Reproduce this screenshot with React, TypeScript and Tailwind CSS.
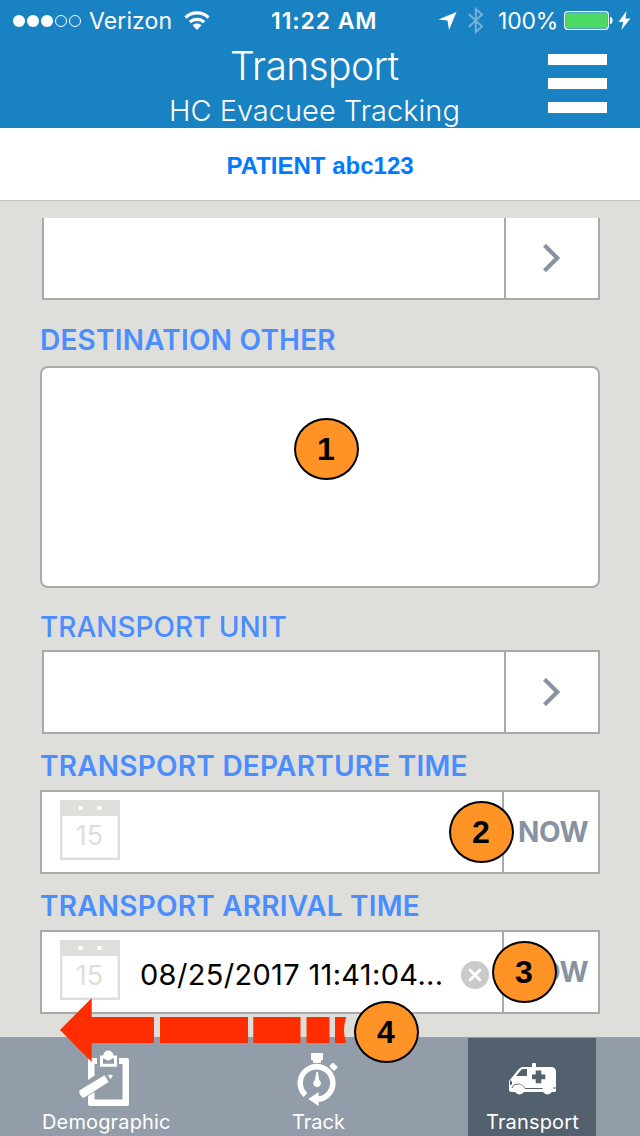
import React from "react";

function StatusBar() {
  return (
    <div className="relative flex h-[41px] items-center text-[23px] leading-[41px] whitespace-nowrap">
      <div className="flex w-[271px] items-center pl-[13px]">
        <div className="flex gap-[2px]">
          {[1, 1, 1, 0, 0].map((on, i) => (
            <span
              key={i}
              className={on ? "size-3 rounded-full bg-white" : "size-3 rounded-full border border-white"}
            />
          ))}
        </div>
        <span className="ml-[8px] w-[84px] pt-px tracking-[0.1px]">Verizon</span>
        <svg className="ml-[11px]" width="26" height="20" viewBox="0 0 26 20" fill="none" stroke="#fff">
          <path d="M1.5 6.6C8 0.4 18 0.4 24.5 6.6" strokeWidth="3.2" />
          <path d="M5.8 11.2C10 7.3 16 7.3 20.2 11.2" strokeWidth="3.2" />
          <path d="M8.5 14.3C11 12 15 12 17.5 14.3L13 19Z" fill="#fff" stroke="none" />
        </svg>
      </div>
      <span className="w-[167px] pt-px font-semibold tracking-[0.9px]">11:22 AM</span>
      <svg width="200" height="40" viewBox="437 0 200 40" className="absolute left-[437px] top-0">
        <path d="M438.5 19.5L456.5 12L449 30L447.5 20.5Z" fill="#fff" />
        <path
          d="M468.7 14L482 26.5L475.8 32V9L482 14.5L468.7 27"
          fill="none"
          stroke="#72b1db"
          strokeWidth="2"
        />
        <rect x="564.7" y="11.7" width="43.6" height="17.6" rx="3" fill="none" stroke="#fff" strokeWidth="1.2" />
        <rect x="566" y="13" width="41" height="15" rx="1.5" fill="#4cd964" />
        <path d="M610 17C613.5 17 613.5 24 610 24Z" fill="#fff" />
        <path d="M626.5 11L618.5 22H623.2L621.3 30L630.5 18.5H625.5Z" fill="#fff" />
      </svg>
      <span className="ml-[60px] pt-px tracking-[-0.2px]">100%</span>
    </div>
  );
}

function Header() {
  return (
    <header className="relative h-32 shrink-0 overflow-hidden bg-[#1982c3] text-white">
      <StatusBar />
      <h1 className="pl-[230px] text-[39px] leading-[50px] font-[350] tracking-[-0.6px] whitespace-nowrap">
        Transport
      </h1>
      <h2 className="pl-[169px] text-[29px] leading-[40px] font-[350] tracking-[0px] whitespace-nowrap">
        HC Evacuee Tracking
      </h2>
      <button aria-label="Menu" className="absolute left-[548px] top-[54px] flex w-[59px] flex-col gap-[13px]">
        <span className="h-[11px] bg-white" />
        <span className="h-[11px] bg-white" />
        <span className="h-[11px] bg-white" />
      </button>
    </header>
  );
}

function Chevron() {
  return (
    <svg width="17" height="28" viewBox="0 0 17 28" fill="none" stroke="#8793a3" strokeWidth="4.2">
      <path d="M1.5 1.3L14.2 14L1.5 26.7" />
    </svg>
  );
}

function CalendarIcon() {
  return (
    <svg width="60" height="60" viewBox="0 0 60 60" className="ml-[18px] shrink-0">
      <rect x="1.2" y="1.2" width="57.6" height="57.6" fill="#fff" stroke="#dedfda" strokeWidth="2.4" />
      <rect width="60" height="16" fill="#dedfda" />
      <rect x="18.5" y="6" width="4" height="4" fill="#fff" />
      <rect x="37.5" y="6" width="4" height="4" fill="#fff" />
      <text
        x="29.5"
        y="44.5"
        textAnchor="middle"
        fill="#dedfda"
        fontFamily="Inter, sans-serif"
        fontSize="27"
        fontWeight="400"
      >
        15
      </text>
    </svg>
  );
}

function SelectRow({ className }: { className: string }) {
  return (
    <div className={`${className} ml-[42px] flex w-[558px] border-[#aaaaaa] bg-white`}>
      <div className="w-[460px]" />
      <div className="flex flex-1 items-center border-l-2 border-[#aaaaaa] pl-[37px]">
        <Chevron />
      </div>
    </div>
  );
}

function TimeRow({ value }: { value?: string }) {
  return (
    <div className="ml-10 flex h-[84px] w-[560px] border-2 border-[#aaaaaa] bg-white">
      <div className="flex w-[460px] items-start pt-2">
        <CalendarIcon />
        {value && (
          <>
            <span className="ml-[20px] mt-[11px] w-[306px] text-[29px] leading-[48px] font-normal tracking-[0.33px] whitespace-nowrap text-black">
              {value}
            </span>
            <svg width="28" height="28" viewBox="0 0 28 28" className="ml-[15px] mt-[21px] shrink-0">
              <circle cx="14" cy="14" r="14" fill="#cacaca" />
              <path d="M8.3 8.3L19.7 19.7M19.7 8.3L8.3 19.7" stroke="#fff" strokeWidth="2.7" />
            </svg>
          </>
        )}
      </div>
      <div className="flex flex-1 items-center border-l-2 border-[#aaaaaa] pl-[14px] text-[28px] font-bold tracking-[-0.4px] text-[#8793a3]">
        <span className="leading-[80px]">NOW</span>
      </div>
    </div>
  );
}

const markers = [
  { n: "1", place: "left-[294px] top-[418px]" },
  { n: "2", place: "left-[449px] top-[801px]" },
  { n: "3", place: "left-[492px] top-[941px]" },
  { n: "4", place: "left-[354px] top-[1001px]" },
];

function Arrow() {
  return (
    <svg width="288" height="66" viewBox="60 997 288 66" className="absolute left-[60px] top-[997px]" fill="#ff2d00">
      <path d="M60 1030L91.7 998V1017H154V1043H91.7V1062Z" />
      <path d="M160 1017H248V1043H160ZM253.3 1017H300.5V1043H253.3ZM306.5 1017H329.5V1043H306.5Z" />
      <path d="M335 1017H346V1018Q342 1030 346 1042V1043H335Z" />
    </svg>
  );
}

function ClipboardIcon() {
  return (
    <svg width="52" height="56" viewBox="78 1050 52 56" className="absolute left-[78px] top-[13px]" fill="#fff">
      <path d="M88 1058H97V1064H94.5V1075.5L88 1080Z" />
      <path d="M119 1058H127Q129 1058 129 1060V1104Q129 1106 127 1106H90Q88 1106 88 1104V1096L94.5 1092V1099.5H122.5V1064H119Z" />
      <path d="M101.5 1057H115.5V1065.3H101.5Z" fill="none" stroke="#fff" strokeWidth="3" />
      <circle cx="108.3" cy="1055.5" r="5" />
      <path d="M79.3 1090.5L104.5 1075.3L108.7 1082L83.5 1098Q79 1095.5 79.3 1090.5Z" />
      <path d="M108 1074.7L113 1075L110.5 1079.5Z" />
    </svg>
  );
}

function StopwatchIcon() {
  return (
    <svg width="42" height="56" viewBox="297 1051 42 56" className="absolute left-[83px] top-[14px]" fill="#fff">
      <path d="M311 1053H323V1060H321.5L320.5 1063H313.5L312.5 1060H311Z" />
      <rect x="330" y="1064" width="7" height="5.4" rx="1" transform="rotate(45 333.5 1066.7)" />
      <path
        d="M305.5 1095A16.3 16.3 0 1 1 317.3 1099.3"
        fill="none"
        stroke="#fff"
        strokeWidth="5.5"
      />
      <path d="M308.3 1099L318.6 1092V1106Z" />
      <path d="M316.3 1072H318L319.2 1080A3.8 3.8 0 1 1 315 1080Z" />
    </svg>
  );
}

function AmbulanceIcon() {
  return (
    <svg width="50" height="34" viewBox="508 1062 50 34" className="absolute left-[40px] top-[24px]">
      <path
        d="M532 1067V1064Q532 1063 533 1063H535Q536 1063 536 1064V1067H551Q556 1067 556 1072V1091Q556 1092 554 1092H511Q509 1092 509 1089V1081L518 1070Q520 1067 523 1067Z"
        fill="#fff"
      />
      <path d="M522 1069H527V1076H516Z" fill="#53606e" />
      <path d="M535.7 1070.5H541.3V1074.5H545.3V1079.3H541.3V1083.3H535.7V1079.3H532V1074.5H535.7Z" fill="#53606e" />
      <path d="M510 1080L512 1081.5V1084.5L510 1085Z" fill="#53606e" />
      <path d="M512 1088Q513 1084 519 1084Q524 1085 525 1088.5H544" fill="none" stroke="#53606e" strokeWidth="1" />
      <circle cx="519.5" cy="1089.5" r="5" fill="#fff" />
      <circle cx="547.5" cy="1089.5" r="5" fill="#fff" />
      <path d="M553 1088H556" stroke="#53606e" />
    </svg>
  );
}

function TabBar() {
  return (
    <nav className="flex h-[99px] shrink-0 bg-[#929da9] text-[20px] leading-[26px] whitespace-nowrap text-white">
      <div className="relative w-[214px] pl-[42px] pt-[72px]">
        <ClipboardIcon />
        <span className="tracking-[0.15px]">Demographic</span>
      </div>
      <div className="relative w-[254px] pl-[78px] pt-[72px]">
        <StopwatchIcon />
        <span className="tracking-[0px]">Track</span>
      </div>
      <div className="relative mt-px w-32 bg-[#53606e] pl-[18px] pt-[71px]">
        <AmbulanceIcon />
        <span className="tracking-[0.15px]">Transport</span>
      </div>
    </nav>
  );
}

export default function App() {
  return (
    <div className="relative flex h-[1136px] w-[640px] flex-col overflow-hidden bg-[#dedfda] font-['Inter',sans-serif]">
      <Header />
      <div className="flex h-[73px] shrink-0 items-center justify-center border-b border-[#c4c5c1] bg-white pt-[3px] font-['Liberation_Sans',Arial,sans-serif] text-[24px] leading-[30px] font-bold text-[#007aff]">
        PATIENT abc123
      </div>
      <main className="h-[836px] shrink-0 overflow-hidden pt-[17px] text-[28px] font-semibold whitespace-nowrap text-[#4b8dff]">
        <SelectRow className="h-[82px] border-x-2 border-b-2" />
        <div className="ml-10 h-[66px] leading-[81px] tracking-[0.22px]">DESTINATION OTHER</div>
        <div className="ml-10 h-[222px] w-[560px] rounded-lg border-2 border-[#aaaaaa] bg-white" />
        <div className="ml-10 h-[62px] leading-[79px] font-medium">TRANSPORT UNIT</div>
        <SelectRow className="h-[84px] border-2" />
        <div className="ml-10 h-[56px] leading-[65px] tracking-[0.24px]">TRANSPORT DEPARTURE TIME</div>
        <TimeRow />
        <div className="ml-10 h-[56px] leading-[65px] tracking-[0.22px]">TRANSPORT ARRIVAL TIME</div>
        <TimeRow value="08/25/2017 11:41:04..." />
      </main>
      <TabBar />
      <Arrow />
      {markers.map((m) => (
        <div
          key={m.n}
          className={`${m.place} absolute flex h-[62px] w-[65px] items-center justify-center rounded-[50%] border-2 border-black bg-[#ff9326] pr-px font-['Liberation_Sans',Arial,sans-serif] text-[32px] leading-none font-bold text-black`}
        >
          {m.n}
        </div>
      ))}
    </div>
  );
}
